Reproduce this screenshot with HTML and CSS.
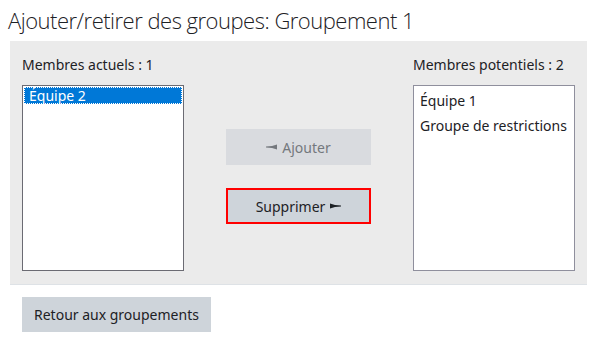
FILE: index.html
```html
<!DOCTYPE html>
<html lang="fr">
<head>
    <meta charset="UTF-8">
    <title>Ajouter/retirer des groupes</title>
    <link rel="stylesheet" href="styles.css">
</head>
<body>
    <h2 class="page-title">Ajouter/retirer des groupes: Groupement 1</h2>

    <div class="assign-panel">
        <label class="col-label col-left">Membres actuels : 1</label>
        <label class="col-label col-right">Membres potentiels : 2</label>

        <div class="listbox listbox-focus col-left">
            <div class="option selected">Équipe 2</div>
        </div>

        <div class="actions">
            <button class="btn btn-disabled" disabled>
                <svg class="arrow" width="11" height="6" viewBox="0 0 11 6"><polygon points="11,0.5 6,2 0,2.6 0,3.4 6,4 11,5.5"/></svg>
                Ajouter
            </button>
            <button class="btn btn-focus">
                Supprimer
                <svg class="arrow" width="11" height="6" viewBox="0 0 11 6"><polygon points="0,0.5 5,2 11,2.6 11,3.4 5,4 0,5.5"/></svg>
            </button>
        </div>

        <div class="listbox col-right">
            <div class="option">Équipe 1</div>
            <div class="option">Groupe de restrictions</div>
        </div>
    </div>

    <div class="footer">
        <button class="btn">Retour aux groupements</button>
    </div>
</body>
</html>
```

FILE: styles.css
```css
body {
    margin: 0;
    font-family: "Noto Sans", "Open Sans", sans-serif;
    font-size: 14px;
    color: #1d2125;
    background: #fff;
}

.page-title {
    margin: 0;
    padding: 4px 8px 0 8px;
    height: 37px;
    font-family: "Open Sans", sans-serif;
    font-weight: 300;
    font-size: 22px;
    letter-spacing: -0.5px;
    line-height: 32px;
    color: #1d2125;
}

.assign-panel {
    margin-left: 10px;
    width: 553px;
    padding: 14px 12px 13px 12px;
    background: #ebebeb;
    border-bottom: 1px solid #dee2e6;
    display: grid;
    grid-template-columns: 162px 1fr 162px;
    grid-template-rows: 20px 186px;
    row-gap: 10px;
}

.col-left { grid-column: 1; }
.col-right { grid-column: 3; }

.col-label {
    grid-row: 1;
    line-height: 20px;
}

.listbox {
    grid-row: 2;
    box-sizing: border-box;
    background: #fff;
    border: 1px solid #8f8f9d;
    padding: 2px 1px 1px 1px;
}

.listbox-focus {
    border-color: #6b6b73;
    padding-top: 1px;
}

.option {
    padding: 0 5px;
    line-height: 25px;
}

.listbox-focus .option {
    line-height: 17px;
}

.option.selected {
    background: #0078d7;
    color: #fff;
    outline: 1px dotted #fff;
    outline-offset: -1px;
}

.actions {
    grid-column: 2;
    grid-row: 2;
    display: flex;
    flex-direction: column;
    align-items: center;
    padding-top: 44px;
    gap: 23px;
}

.btn {
    font-family: inherit;
    font-size: 14px;
    color: #1d2125;
    background: #ced4da;
    border: 0;
    border-radius: 0;
    height: 35px;
    padding: 0 12px;
    display: inline-flex;
    align-items: center;
    gap: 5px;
}

.actions .btn {
    width: 145px;
    height: 36px;
    justify-content: center;
}

.btn-disabled {
    background: #d9dbdf;
    color: #74787d;
}

.btn-focus {
    border: 2px solid #f00;
}

.arrow {
    fill: currentColor;
}

.footer {
    padding: 12px 22px;
}
```
